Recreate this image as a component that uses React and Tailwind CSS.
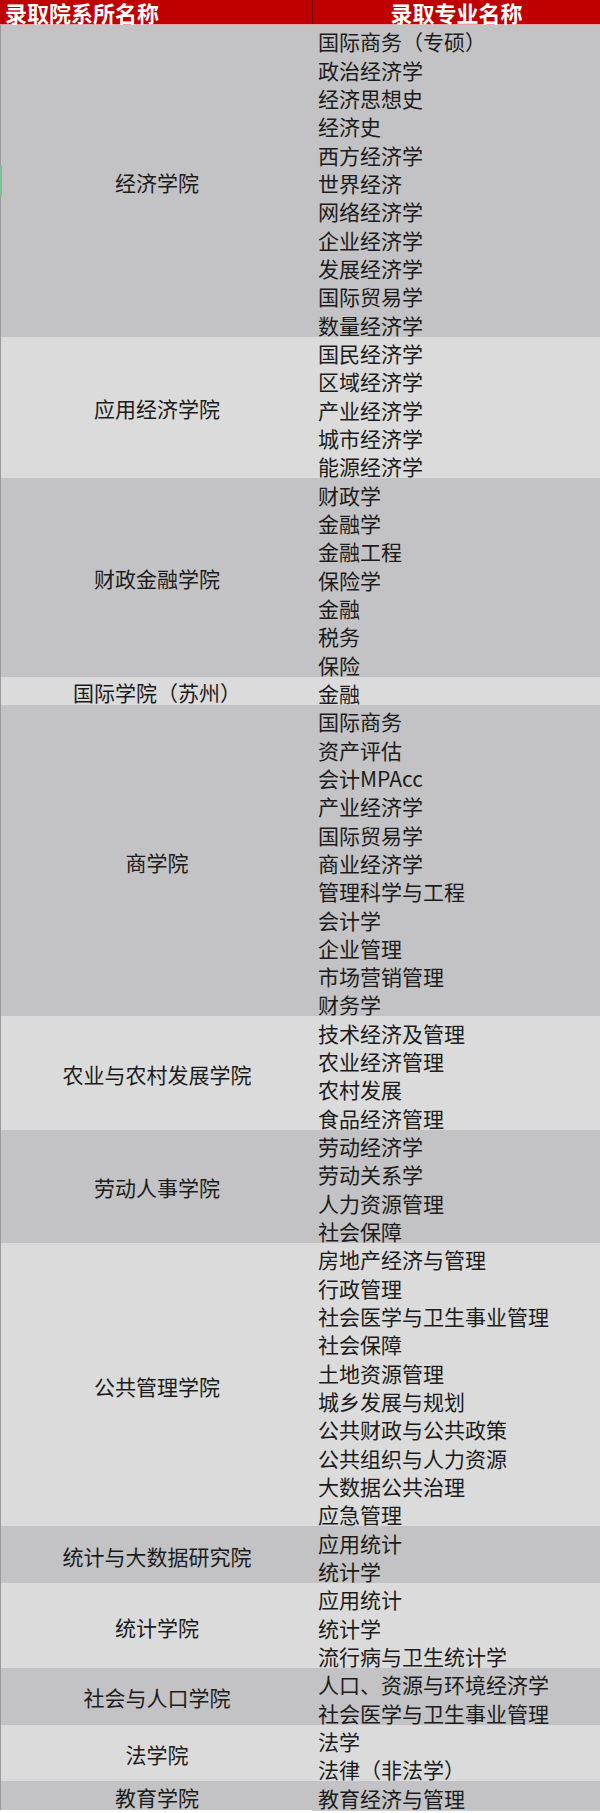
const groups = [
  {
    name: "经济学院",
    majors: ["国际商务（专硕）", "政治经济学", "经济思想史", "经济史", "西方经济学", "世界经济", "网络经济学", "企业经济学", "发展经济学", "国际贸易学", "数量经济学"],
  },
  { name: "应用经济学院", majors: ["国民经济学", "区域经济学", "产业经济学", "城市经济学", "能源经济学"] },
  { name: "财政金融学院", majors: ["财政学", "金融学", "金融工程", "保险学", "金融", "税务", "保险"] },
  { name: "国际学院（苏州）", majors: ["金融"] },
  {
    name: "商学院",
    majors: ["国际商务", "资产评估", "会计MPAcc", "产业经济学", "国际贸易学", "商业经济学", "管理科学与工程", "会计学", "企业管理", "市场营销管理", "财务学"],
  },
  { name: "农业与农村发展学院", majors: ["技术经济及管理", "农业经济管理", "农村发展", "食品经济管理"] },
  { name: "劳动人事学院", majors: ["劳动经济学", "劳动关系学", "人力资源管理", "社会保障"] },
  {
    name: "公共管理学院",
    majors: ["房地产经济与管理", "行政管理", "社会医学与卫生事业管理", "社会保障", "土地资源管理", "城乡发展与规划", "公共财政与公共政策", "公共组织与人力资源", "大数据公共治理", "应急管理"],
  },
  { name: "统计与大数据研究院", majors: ["应用统计", "统计学"] },
  { name: "统计学院", majors: ["应用统计", "统计学", "流行病与卫生统计学"] },
  { name: "社会与人口学院", majors: ["人口、资源与环境经济学", "社会医学与卫生事业管理"] },
  { name: "法学院", majors: ["法学", "法律（非法学）"] },
  { name: "教育学院", majors: ["教育经济与管理"] },
];

const Group = ({ group, dark }) => (
  <div className={`flex ${dark ? "bg-[#c3c2c4]" : "bg-[#dbdbdb]"}`}>
    <div className="w-[312px] flex items-center justify-center pt-[3px] text-[21px] leading-[21px]">{group.name}</div>
    <div className="flex-1 flex flex-col pl-[5px]">
      {group.majors.map((m, i) => (
        <div key={i} className="h-[28.33px] flex items-end pb-[1px] text-[21px] leading-[21px] whitespace-nowrap">
          {m}
        </div>
      ))}
    </div>
  </div>
);

export default function App() {
  return (
    <div className="w-[600px] bg-white text-[#1c1c1c]" style={{ fontFamily: '"Noto Sans CJK SC", "Noto Sans", sans-serif' }}>
      <div className="relative">
        <div className="flex h-[25px] bg-[#c00000] text-white font-bold text-[22px] leading-[25px] border-b border-[#e8a0a0]">
          <div className="w-[312px] pl-[5px]">录取院系所名称</div>
          <div className="flex-1 text-center border-l border-[#5a0a0a]">录取专业名称</div>
        </div>
        <div className="border-l border-[#9a9a9a]">
          {groups.map((g, i) => (
            <Group key={i} group={g} dark={i % 2 === 0} />
          ))}
        </div>
        <div className="absolute left-0 top-[166px] w-[2px] h-[30px] bg-[#7fbf93]" />
      </div>
      <div className="h-[3px] flex">
        <div className="w-[312px]" />
        <div className="flex-1 border-t border-[#cfcfcf]" />
      </div>
    </div>
  );
}
